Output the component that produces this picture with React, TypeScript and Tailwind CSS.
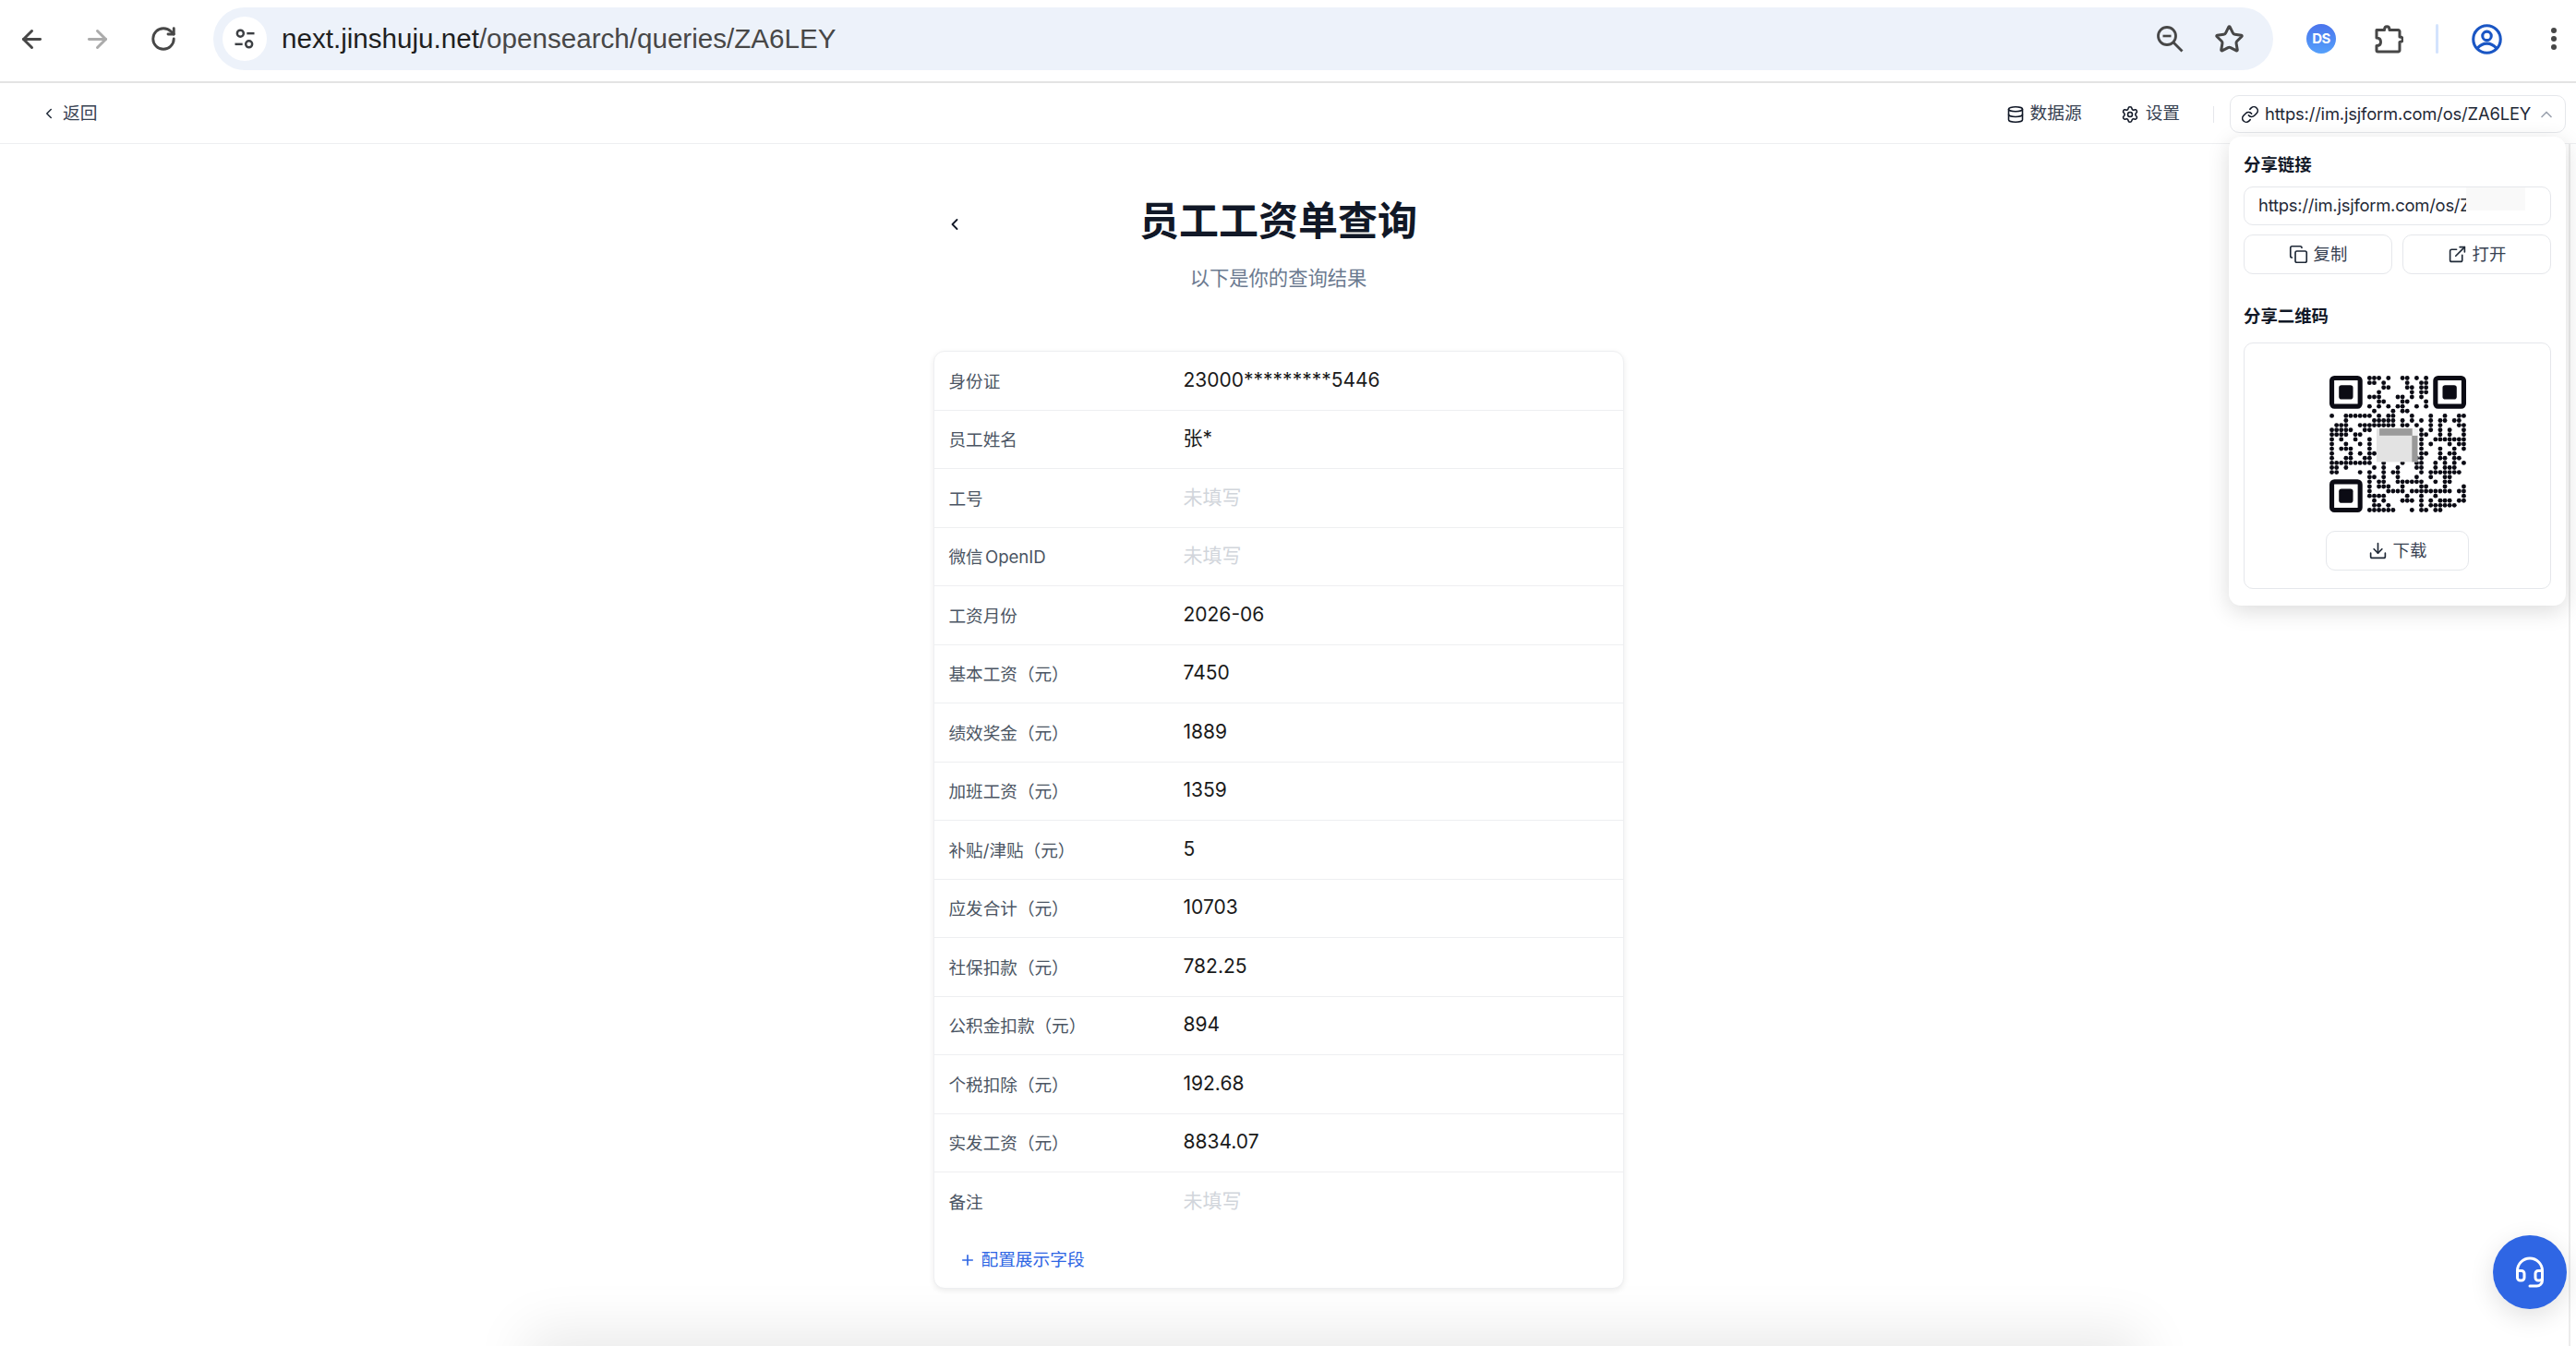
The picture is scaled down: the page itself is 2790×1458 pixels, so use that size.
import React from "react";
import { ArrowLeft, ArrowRight, RotateCw, Star, ChevronLeft, ChevronUp, Database, Settings, Link, Copy, ExternalLink, Download, Plus, Headset } from "lucide-react";

const FONT = "[font-family:Inter,'Noto_Sans_CJK_SC',sans-serif]";

const rows: { label: string; value?: string }[] = [
  { label: "身份证", value: "23000*********5446" },
  { label: "员工姓名", value: "张*" },
  { label: "工号" },
  { label: "微信 OpenID" },
  { label: "工资月份", value: "2026-06" },
  { label: "基本工资（元）", value: "7450" },
  { label: "绩效奖金（元）", value: "1889" },
  { label: "加班工资（元）", value: "1359" },
  { label: "补贴/津贴（元）", value: "5" },
  { label: "应发合计（元）", value: "10703" },
  { label: "社保扣款（元）", value: "782.25" },
  { label: "公积金扣款（元）", value: "894" },
  { label: "个税扣除（元）", value: "192.68" },
  { label: "实发工资（元）", value: "8834.07" },
  { label: "备注" },
];

const qr: number[][] = [
  [8,9,10,12,15,16,18,20],
  [8,9,11,16,19,20],
  [11,12,16,17,19,20],
  [10,17,19,20],
  [8,9,10,14,15,17,19],
  [10,11,15,16,20],
  [8,10,12,14,15,18,20],
  [9,13,15,16],
  [0,3,4,5,6,7,8,10,12,13,17,21,24,27,28],
  [3,9,10,11,12,13,15,17,19,21,23,24,26,27],
  [1,2,3,6,7,8,9,10,11,12,13,15,16,18,21,23,27,28],
  [0,1,2,3,4,7,8,19,21,23,25,28],
  [0,1,2,3,5,6,19,20,23,25,28],
  [0,2,5,8,19,22,23,24,25,26,27,28],
  [0,3,6,8,19,21,25,27,28],
  [0,2,3,4,8,19,23,26,28],
  [0,4,6,8,9,19,20,23,25,26],
  [0,3,4,7,8,18,19,23,24,26,27],
  [0,1,2,3,4,5,6,7,8,11,15,18,19,22,24,26,28],
  [0,1,3,9,11,14,18,19,22,24,25,26],
  [0,1,6,8,11,13,14,19,21,22,23,24,25,26,27],
  [8,9,11,14,18,21,24,25],
  [8,10,11,14,15,16,17,18,19,22,24,25],
  [8,10,11,12,15,19,20,24,28],
  [8,12,13,14,15,17,18,19,20,21,22,23,24,25,27,28],
  [8,9,10,11,16,19,22,28],
  [9,11,15,16,17,19,21,23,24,25,27,28],
  [9,10,12,19,21,22,23,24,25,26],
  [8,9,10,11,12,13,17,19,20,22,23],
];

function Finder({ x, y }: { x: number; y: number }) {
  return (
    <g>
      <rect x={x + 0.5} y={y + 0.5} width={6} height={6} rx={0.55} fill="none" stroke="#0b0b14" strokeWidth={1} />
      <rect x={x + 2} y={y + 2} width={3} height={3} rx={0.55} fill="#0b0b14" />
    </g>
  );
}

function QrCode() {
  return (
    <svg viewBox="0 0 29 29" className="w-[148px] h-[148px] block">
      <Finder x={0} y={0} />
      <Finder x={22} y={0} />
      <Finder x={0} y={22} />
      {qr.map((cols, r) =>
        cols.map((c) => <circle key={`${r}-${c}`} cx={c + 0.5} cy={r + 0.5} r={0.48} fill="#0b0b14" />)
      )}
      <rect x={10} y={11.2} width={8.7} height={7.1} fill="#e3e3e3" />
      <rect x={10.6} y={11.2} width={7} height={1.5} fill="#9b9b9b" />
      <rect x={17.5} y={12.7} width={1.2} height={5.6} fill="#999999" />
      <rect x={17.6} y={11.2} width={1.1} height={1.5} fill="#f2f2f2" />
    </svg>
  );
}

function TuneIcon() {
  return (
    <svg viewBox="0 0 24 24" className="w-[28px] h-[28px]" fill="none" stroke="#3c3f43" strokeWidth={2.1}>
      <circle cx="8" cy="7" r="3" />
      <path d="M14 7h7" />
      <circle cx="16" cy="17" r="3" />
      <path d="M3 17h7" />
    </svg>
  );
}

function ZoomOutIcon() {
  return (
    <svg viewBox="0 0 30 30" className="w-[30px] h-[30px]" fill="none" stroke="#474747" strokeWidth={2.8}>
      <circle cx="12" cy="12" r="9.5" />
      <path d="M7.5 12h9" strokeWidth={2.6} />
      <path d="M19 19l9.5 9.5" />
    </svg>
  );
}

function PuzzleIcon() {
  return (
    <svg viewBox="0 0 32 32" className="w-[32px] h-[32px]" fill="none" stroke="#474747" strokeWidth={3} strokeLinejoin="round">
      <path d="M3 6.5h8.5c0-5 5.500-5 5.500 0H26.500a1.500 1.500 0 0 1 1.500 1.500V14c4.500 0 4.500 5.500 0 5.500v9a1.500 1.500 0 0 1-1.500 1.500H4.500A1.500 1.500 0 0 1 3 28.500V23.500c3.500 0 4.500-2 4.500-4s-1-4.500-4.500-4.500z" />
    </svg>
  );
}

function ProfileIcon() {
  return (
    <svg viewBox="0 0 32 32" className="w-[33px] h-[33px]" fill="none" stroke="#1a56c4" strokeWidth={3}>
      <circle cx="16" cy="16" r="14.300" />
      <circle cx="16" cy="12.500" r="4.600" />
      <path d="M6 25.500c3-3.500 6.500-5 10-5s7 1.500 10 5" />
    </svg>
  );
}

export default function App() {
  return (
    <div className={`relative h-[1458px] w-[2790px] overflow-hidden bg-white flex flex-col ${FONT}`}>
      {/* Browser toolbar */}
      <div className="h-[90px] shrink-0 flex items-start pt-[8px] border-b-[2px] border-[#e3e3e3] bg-white">
        <div className="h-[68px] flex items-center pl-[19px] shrink-0">
          <ArrowLeft className="w-[31px] h-[31px] text-[#474747]" strokeWidth={2.3} />
          <ArrowRight className="w-[31px] h-[31px] text-[#ababab] ml-[40px]" strokeWidth={2.3} />
          <RotateCw className="w-[30px] h-[30px] text-[#474747] ml-[41px]" strokeWidth={2.3} />
        </div>
        <div className="ml-[39px] w-[2231px] h-[68px] rounded-full bg-[#edf2fa] flex items-center pl-[10px] pr-[31px] shrink-0">
          <div className="w-[48px] h-[48px] rounded-full bg-white flex items-center justify-center shrink-0">
            <TuneIcon />
          </div>
          <div className="ml-[16px] flex-1 text-[29.600px] leading-none text-[#474747] font-['Liberation_Sans',sans-serif]">
            <span className="text-[#1f1f1f]">next.jinshuju.net</span>/opensearch/queries/ZA6LEY
          </div>
          <ZoomOutIcon />
          <Star className="w-[33px] h-[33px] text-[#474747] ml-[33px]" strokeWidth={2.2} />
        </div>
        <div className="h-[68px] flex items-center ml-[36px]">
          <div className="w-[32px] h-[32px] rounded-full bg-gradient-to-b from-[#4b74ec] to-[#55a0fb] text-white text-[15px] font-bold flex items-center justify-center tracking-[-0.5px]">
            DS
          </div>
          <div className="ml-[41px]"><PuzzleIcon /></div>
          <div className="ml-[35px] w-[3px] h-[32px] rounded bg-[#d3e3fd]" />
          <div className="ml-[36px]"><ProfileIcon /></div>
          <div className="ml-[53px] flex flex-col gap-[3px]">
            <span className="w-[6px] h-[6px] rounded-full bg-[#474747]" />
            <span className="w-[6px] h-[6px] rounded-full bg-[#474747]" />
            <span className="w-[6px] h-[6px] rounded-full bg-[#474747]" />
          </div>
        </div>
      </div>

      {/* App header */}
      <div className="h-[66px] shrink-0 flex items-center justify-between border-b border-[#eeeff1] pl-[44px] pr-[11px] pt-[2px] text-[18.700px] text-[#374151]">
        <div className="flex items-center gap-[6px]">
          <ChevronLeft className="w-[18px] h-[18px] text-[#1f2937]" strokeWidth={2} />
          <span>返回</span>
        </div>
        <div className="flex items-center">
          <Database className="w-[20px] h-[20px] text-[#111827]" strokeWidth={1.9} />
          <span className="ml-[6px]">数据源</span>
          <Settings className="w-[20px] h-[20px] text-[#111827] ml-[42px]" strokeWidth={1.9} />
          <span className="ml-[7px]">设置</span>
          <div className="ml-[36px] w-px h-[18px] bg-[#e5e7eb]" />
          <div className="ml-[17px] w-[364px] h-[41px] rounded-[10px] border border-[#e5e7eb] flex items-center pl-[11px] text-[#1f2937]">
            <Link className="w-[20px] h-[20px] text-[#111827]" strokeWidth={1.9} />
            <span className="ml-[6px] text-[18.400px] whitespace-nowrap tracking-[-0.17px]">https://im.jsjform.com/os/ZA6LEY</span>
            <ChevronUp className="w-[20px] h-[20px] text-[#9ca3af] ml-[7px]" strokeWidth={2} />
          </div>
        </div>
      </div>

      {/* Content */}
      <div className="flex-1 flex min-h-0">
        <div className="flex-1 flex flex-col items-center pr-[13px] min-w-0">
          <div className="w-[748px] mt-[60px] grid grid-cols-[1fr_auto_1fr] items-center">
            <ChevronLeft className="w-[20px] h-[20px] text-[#111827] ml-[13px] mt-[8px]" strokeWidth={2.2} />
            <h1 className="text-[43px] leading-[46px] font-bold text-[#111827]">员工工资单查询</h1>
            <div />
          </div>
          <p className="mt-[26px] text-[21.300px] leading-[26px] text-[#6b7a90]">以下是你的查询结果</p>
          <div className="mt-[66px] w-[748px] h-[1016px] rounded-[12px] border border-[#eeeff1] bg-white shadow-[0_2px_6px_rgba(0,0,0,0.08)] flex flex-col">
            {rows.map((r, i) => (
              <div key={r.label} className={`h-[63.500px] shrink-0 flex items-center pl-[16px] ${i < rows.length - 1 ? "border-b border-[#eeeff1]" : ""}`}>
                <div className="w-[254px] shrink-0 text-[18.600px] text-[#4b5563] pt-[3px] [word-spacing:-3px]">{r.label}</div>
                {r.value ? (
                  <div className="text-[21px] text-[#1a1a1a] leading-none -mt-[2px]">{r.value}</div>
                ) : (
                  <div className="text-[21px] text-[#d1d5db] leading-none -mt-[2px]">未填写</div>
                )}
              </div>
            ))}
            <div className="flex items-center pl-[27px] mt-[17px] text-[18.700px] text-[#2f66e4]">
              <Plus className="w-[18px] h-[18px]" strokeWidth={2.2} />
              <span className="ml-[6px]">配置展示字段</span>
            </div>
          </div>
        </div>
        <div className="w-[8px] shrink-0 border-l-[2px] border-[#ececec] bg-white" />
      </div>

      {/* Bottom soft shadow */}
      <div className="absolute left-[610px] top-[1482px] w-[1670px] h-[40px] shadow-[0_0_60px_40px_rgba(0,0,0,0.085)]" />

      {/* Share popover */}
      <div className="absolute left-[2414px] top-[148px] w-[365px] h-[508px] rounded-[13px] bg-white shadow-[0_6px_24px_rgba(0,0,0,0.14)] px-[16px] pt-[19px] text-[#1f2937]">
        <div className="text-[18.400px] leading-[22px] font-semibold text-[#111827]">分享链接</div>
        <div className="relative mt-[13px] h-[42px] rounded-[10px] border border-[#e5e7eb] pl-[15px] flex items-center overflow-hidden">
          <span className="w-[225px] overflow-hidden whitespace-nowrap text-[18.400px] tracking-[-0.22px] text-[#1f2937]">https://im.jsjform.com/os/ZA6LEY</span>
          <div className="absolute left-[240px] top-0 w-[64px] h-[25px] bg-[#f9f9f9]" />
        </div>
        <div className="mt-[10px] flex gap-[11px]">
          <div className="flex-1 h-[43px] rounded-[10px] border border-[#e5e7eb] flex items-center justify-center gap-[6px] text-[18.400px] text-[#374151]">
            <Copy className="w-[21px] h-[21px] text-[#1f2937]" strokeWidth={1.9} />
            <span>复制</span>
          </div>
          <div className="flex-1 h-[43px] rounded-[10px] border border-[#e5e7eb] flex items-center justify-center gap-[6px] text-[18.400px] text-[#374151]">
            <ExternalLink className="w-[21px] h-[21px] text-[#1f2937]" strokeWidth={1.9} />
            <span>打开</span>
          </div>
        </div>
        <div className="mt-[34px] text-[18.400px] leading-[22px] font-semibold text-[#111827]">分享二维码</div>
        <div className="mt-[18px] h-[267px] rounded-[10px] border border-[#e5e7eb] flex flex-col items-center pt-[35px]">
          <QrCode />
          <div className="mt-[20px] w-[155px] h-[43px] rounded-[10px] border border-[#e5e7eb] flex items-center justify-center gap-[6px] text-[18.400px] text-[#374151]">
            <Download className="w-[21px] h-[21px] text-[#1f2937]" strokeWidth={1.9} />
            <span>下载</span>
          </div>
        </div>
      </div>

      {/* Support button */}
      <div className="absolute left-[2700px] top-[1338px] w-[80px] h-[80px] rounded-full bg-[#2f66e4] shadow-[0_8px_28px_rgba(0,0,0,0.12)] flex items-center justify-center">
        <Headset className="w-[36px] h-[36px] text-white" strokeWidth={2} />
      </div>
    </div>
  );
}
